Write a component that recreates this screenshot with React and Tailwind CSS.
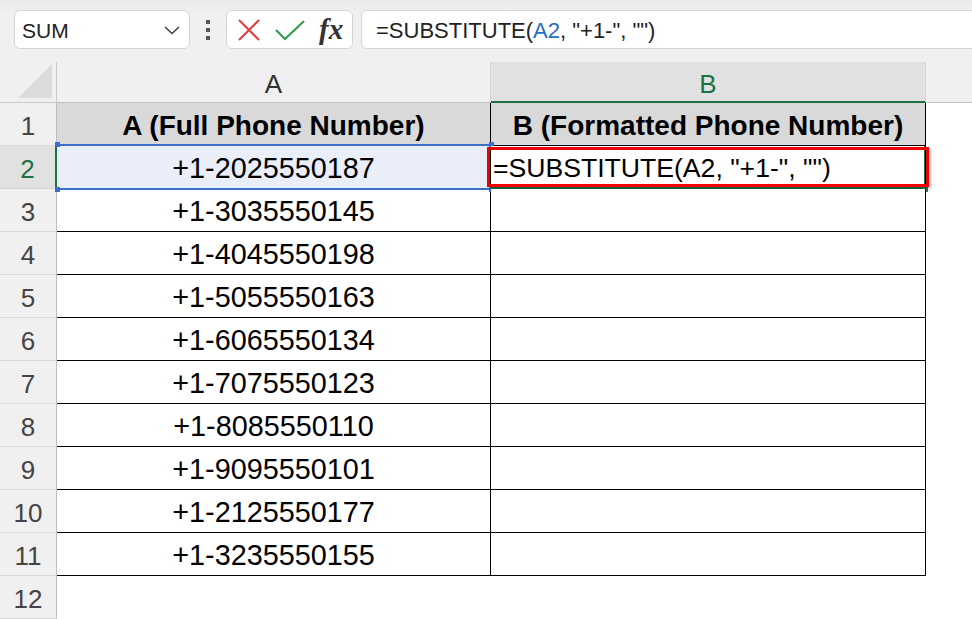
import React from "react";

const phones = [
  "+1-2025550187",
  "+1-3035550145",
  "+1-4045550198",
  "+1-5055550163",
  "+1-6065550134",
  "+1-7075550123",
  "+1-8085550110",
  "+1-9095550101",
  "+1-2125550177",
  "+1-3235550155",
];

const font = { fontFamily: '"Liberation Sans", Arial, sans-serif' };

const RowHead = ({ n, active }) => (
  <div
    className={
      active
        ? "flex items-center justify-center pt-[5px] bg-[#e1e1e1] border-b border-[#d2d2d2] border-r-2 border-r-[#1e7145] text-[#1e7145] text-[26px]"
        : "flex items-center justify-center pt-[5px] bg-[#f0f0f0] border-b border-[#d8d8d8] border-r border-r-[#bdbdbd] text-[#444] text-[26px]"
    }
  >
    {n}
  </div>
);

export default function App() {
  return (
    <div className="w-[972px] h-[619px] overflow-hidden bg-[#f0f0f0] flex flex-col" style={font}>
      {/* formula bar */}
      <div className="h-[62px] shrink-0 flex items-start pt-[10px] pl-[14px] bg-gradient-to-b from-[#e9e9e9] to-[#f0f0f0] to-[20%]">
        <div className="w-[176px] h-[39px] bg-white border border-[#d4d4d4] rounded-[6px] flex items-center justify-between pl-[7px] pr-[8px]">
          <span className="text-[21px] text-[#222] pt-[2px]">SUM</span>
          <svg width="18" height="12" viewBox="0 0 18 12" fill="none" stroke="#444" strokeWidth="1.6">
            <path d="M2 3 L9 9.5 L16 3" />
          </svg>
        </div>
        <div className="w-[36px] h-[39px] flex flex-col items-center justify-center gap-[4px]">
          <span className="w-[4px] h-[4px] bg-[#555]" />
          <span className="w-[4px] h-[4px] bg-[#555]" />
          <span className="w-[4px] h-[4px] bg-[#555]" />
        </div>
        <div className="w-[127px] h-[39px] bg-white border border-[#d4d4d4] rounded-[6px] flex items-center pl-[10px] gap-[14px]">
          <svg width="24" height="24" viewBox="0 0 24 24" fill="none" stroke="#e83b3b" strokeWidth="2">
            <path d="M2 2 L22 22 M22 2 L2 22" />
          </svg>
          <svg width="30" height="22" viewBox="0 0 30 22" fill="none" stroke="#2e9b4c" strokeWidth="2">
            <path d="M1 11 L10 20 L29 2" />
          </svg>
          <span
            className="text-[29px] italic font-bold text-[#333] leading-none"
            style={{ fontFamily: '"Liberation Serif", "Times New Roman", serif' }}
          >
            fx
          </span>
        </div>
        <div className="ml-[8px] flex-1 h-[39px] mr-[-20px] bg-white border border-[#d4d4d4] rounded-[6px] flex items-center pl-[14px]">
          <span className="text-[22px] text-[#222] pt-[2px]">
            =SUBSTITUTE(<span className="text-[#1f6fc5]">A2</span>, "+1-", "")
          </span>
        </div>
      </div>

      {/* grid */}
      <div className="grid grid-cols-[57px_434px_435px_1fr] grid-rows-[41px_repeat(12,43px)] flex-1">
        {/* header row */}
        <div className="relative bg-[#f0f0f0] border-r border-b border-[#c8c8c8]">
          <svg className="absolute right-[4px] bottom-[4px]" width="34" height="34" viewBox="0 0 34 34">
            <path d="M34 0 L34 34 L0 34 Z" fill="#dcdcdc" />
          </svg>
        </div>
        <div className="flex items-center justify-center pt-[5px] bg-[#f0f0f0] border-r border-[#d4d4d4] border-b border-b-[#c0c0c0] text-[26px] text-[#333]">
          A
        </div>
        <div className="flex items-center justify-center pt-[5px] bg-[#e1e1e1] border-r border-[#d4d4d4] border-b-2 border-b-[#1e7145] text-[26px] text-[#1e7145]">
          B
        </div>
        <div className="bg-[#f0f0f0] border-b border-[#c0c0c0]" />

        {/* row 1 */}
        <RowHead n={1} />
        <div className="flex items-center justify-center pt-[4px] bg-[#d9d9d9] border-r border-b border-black text-[28px] font-bold text-black">
          A (Full Phone Number)
        </div>
        <div className="flex items-center justify-center pt-[4px] bg-[#d9d9d9] border-r border-b border-black text-[28px] font-bold text-black">
          B (Formatted Phone Number)
        </div>
        <div className="bg-white" />

        {/* data rows */}
        {phones.map((p, i) => {
          const row = i + 2;
          const active = row === 2;
          return (
            <React.Fragment key={p}>
              <RowHead n={row} active={active} />
              <div
                className={
                  active
                    ? "relative flex items-center justify-center pt-[4px] bg-[#e9eef8] border-r border-b border-black text-[28.8px] text-black"
                    : "flex items-center justify-center pt-[4px] bg-white border-r border-b border-black text-[28.8px] text-black"
                }
              >
                {p}
                {active && (
                  <div className="absolute -top-[2px] -bottom-[2px] left-0 -right-px border-y-2 border-[#3b6fc9] pointer-events-none">
                    <span className="absolute -left-[2px] -top-[4px] w-[5px] h-[5px] bg-[#3b6fc9]" />
                    <span className="absolute -left-[2px] -bottom-[4px] w-[5px] h-[5px] bg-[#3b6fc9]" />
                    <span className="absolute -right-[3px] -top-[4px] w-[5px] h-[5px] bg-[#3b6fc9]" />
                    <span className="absolute -right-[3px] -bottom-[4px] w-[5px] h-[5px] bg-[#3b6fc9]" />
                  </div>
                )}
              </div>
              <div className="relative flex items-center pt-[4px] bg-white border-r border-b border-black text-[26.6px] text-black">
                {active && (
                  <>
                    <div className="absolute inset-0 -bottom-px border-b-2 border-r border-[#1e7145]" />
                    <span className="absolute -right-[3px] -bottom-[4px] w-[5px] h-[5px] bg-[#3a7a58]" />
                    <div className="absolute -left-[4px] top-[1px] -right-[4px] bottom-[1px] border-[3px] border-[#f00000] shadow-[2px_2px_3px_rgba(0,0,0,0.25)]" />
                    <span className="relative pl-[2px] whitespace-nowrap">=SUBSTITUTE(A2, "+1-", "")</span>
                  </>
                )}
              </div>
              <div className="bg-white" />
            </React.Fragment>
          );
        })}

        {/* row 12 */}
        <RowHead n={12} />
        <div className="bg-white" />
        <div className="bg-white" />
        <div className="bg-white" />
      </div>
    </div>
  );
}
